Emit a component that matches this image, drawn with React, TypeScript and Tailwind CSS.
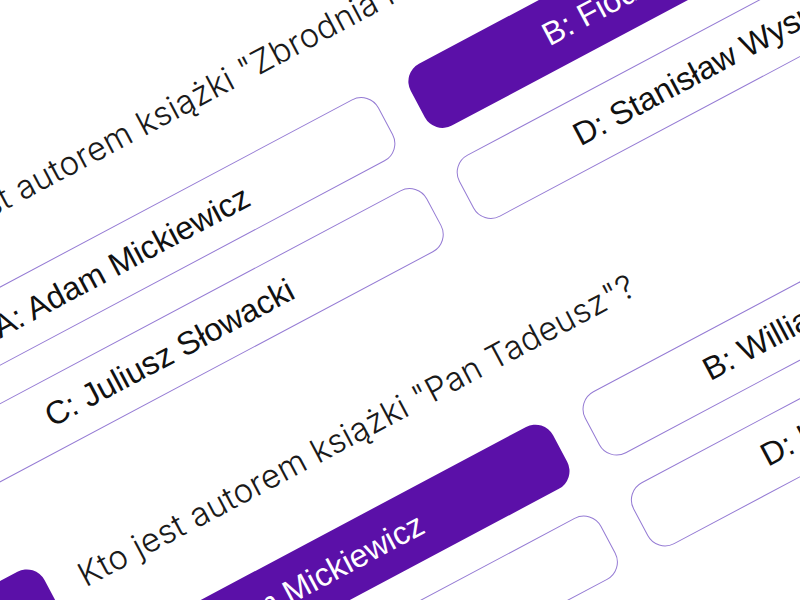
import React from "react";

type Q = { n: number; text: string; answers: string[]; selected: number };

const questions: Q[] = [
  {
    n: 1,
    text: 'Kto jest autorem książki "Zbrodnia i kara"?',
    answers: ["A: Adam Mickiewicz", "B: Fiodor Dostojewski", "C: Juliusz Słowacki", "D: Stanisław Wyspiański"],
    selected: 1,
  },
  {
    n: 2,
    text: 'Kto jest autorem książki "Pan Tadeusz"?',
    answers: ["A: Adam Mickiewicz", "B: William Shakespeare", "C: Juliusz Słowacki", "D: Henryk Sienkiewicz"],
    selected: 0,
  },
];

export default function App() {
  return (
    <div className="relative w-[800px] h-[600px] overflow-hidden bg-white">
      <div className="absolute left-0 top-0 w-[1236px] origin-top-left [transform:rotate(-28deg)_translate(-316px,142px)]">
        {questions.map((q) => (
          <div key={q.n} className="mb-[87px]">
            <div className="flex items-center gap-[33px] h-[70px] mb-[41px]">
              <div className="w-[83px] h-[70px] shrink-0 rounded-[20px] bg-[#5b10a8] text-white flex items-center justify-center text-[32px] font-['Liberation_Sans',sans-serif]">
                {q.n}
              </div>
              <div className="whitespace-nowrap text-[33px] tracking-[0.3px] font-light text-[#1a1a1a] font-['Inter','Noto_Sans',sans-serif]">
                {q.text}
              </div>
            </div>
            <div className="grid grid-cols-2 gap-x-[36px] gap-y-[33px]">
              {q.answers.map((a, i) => (
                <div
                  key={i}
                  className={
                    i === q.selected
                      ? "h-[70px] rounded-[20px] bg-[#5b10a8] text-white flex items-center justify-center whitespace-nowrap text-[32.4px] font-['Liberation_Sans',Arial,sans-serif]"
                      : "h-[70px] rounded-[20px] border border-[#957bd4] bg-white text-[#111] flex items-center justify-center whitespace-nowrap text-[32.4px] font-['Liberation_Sans',Arial,sans-serif]"
                  }
                >
                  {a}
                </div>
              ))}
            </div>
          </div>
        ))}
      </div>
    </div>
  );
}
